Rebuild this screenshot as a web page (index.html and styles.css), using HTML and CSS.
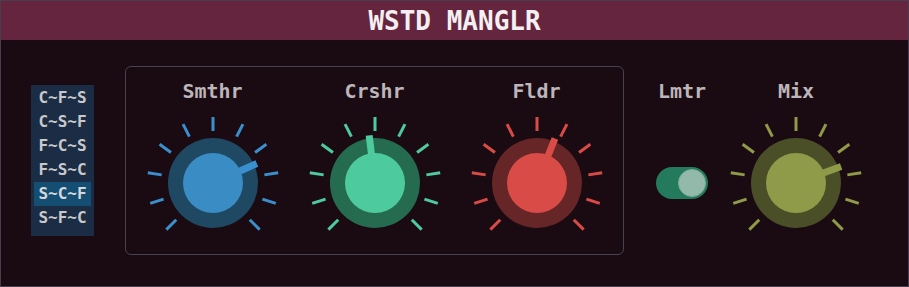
FILE: index.html
```html
<!DOCTYPE html>
<html lang="en">
<head>
    <meta charset="UTF-8">
    <meta name="viewport" content="width=device-width, initial-scale=1.0">
    <title>WSTD MANGLR</title>
    <link rel="stylesheet" href="styles.css">
</head>
<body>
    <div class="plugin">
        <div class="header">
            <h1 class="title">WSTD MANGLR</h1>
        </div>
        <div class="main">
            <ul class="algos">
                <li class="algo">C~F~S</li>
                <li class="algo">C~S~F</li>
                <li class="algo">F~C~S</li>
                <li class="algo">F~S~C</li>
                <li class="algo selected">S~C~F</li>
                <li class="algo">S~F~C</li>
            </ul>

            <div class="frame">
                <div class="knob-col">
                    <div class="label">Smthr</div>
                    <svg class="knob knob-blue" data-angle="66" viewBox="-70 -70 140 140"></svg>
                </div>
                <div class="knob-col">
                    <div class="label">Crshr</div>
                    <svg class="knob knob-green" data-angle="-7" viewBox="-70 -70 140 140"></svg>
                </div>
                <div class="knob-col">
                    <div class="label">Fldr</div>
                    <svg class="knob knob-red" data-angle="22" viewBox="-70 -70 140 140"></svg>
                </div>
            </div>

            <div class="side-col lmtr-col">
                <div class="label">Lmtr</div>
                <div class="toggle-box">
                    <div class="toggle on">
                        <div class="toggle-thumb"></div>
                    </div>
                </div>
            </div>
            <div class="side-col mix-col">
                <div class="label">Mix</div>
                <svg class="knob knob-olive" data-angle="70" viewBox="-70 -70 140 140"></svg>
            </div>
        </div>
    </div>

    <script>
        const SVG_NS = 'http://www.w3.org/2000/svg';

        function el(name, attrs) {
            const node = document.createElementNS(SVG_NS, name);
            for (const key in attrs) node.setAttribute(key, attrs[key]);
            return node;
        }

        function buildKnob(svg) {
            const angle = parseFloat(svg.dataset.angle);

            // 11 ticks from -135 to 135 degrees
            for (let i = 0; i < 11; i++) {
                const a = -135 + i * 27;
                svg.appendChild(el('line', {
                    class: 'tick', x1: 0, y1: -52, x2: 0, y2: -66,
                    transform: 'rotate(' + a + ')'
                }));
            }

            svg.appendChild(el('circle', { class: 'ring', r: 45 }));
            svg.appendChild(el('line', {
                class: 'pointer', x1: 0, y1: 0, x2: 0, y2: -48,
                transform: 'rotate(' + angle + ')'
            }));
            svg.appendChild(el('circle', { class: 'cap', r: 30 }));
        }

        document.querySelectorAll('.knob').forEach(buildKnob);
    </script>
</body>
</html>
```

FILE: styles.css
```css
body {
    margin: 0;
    background-color: #1a0a12;
    font-family: "DejaVu Sans Mono", "Liberation Mono", monospace;
}

.plugin {
    height: 287px;
    box-sizing: border-box;
    border: 1px solid #4a3d4d;
}

.header {
    height: 39px;
    background-color: #66253f;
    display: flex;
    justify-content: center;
    align-items: center;
}

.title {
    margin: 0;
    font-size: 26px;
    font-weight: bold;
    color: #f4f0f2;
}

.main {
    display: flex;
    align-items: flex-start;
    padding-top: 26px;
}

/* algorithm order list */
.algos {
    list-style: none;
    margin: 19px 0 0 30px;
    padding: 1px 3px 6px;
    width: 57px;
    background-color: #1b2d44;
}

.algo {
    height: 24px;
    line-height: 24px;
    text-align: center;
    font-size: 16px;
    font-weight: bold;
    color: #c9c9cb;
}

.algo.selected {
    background-color: #144e73;
    color: #d4d8db;
}

.frame {
    margin-left: 31px;
    width: 499px;
    height: 189px;
    box-sizing: border-box;
    border: 1px solid #4a4150;
    border-radius: 6px;
    padding-top: 12px;
    display: flex;
    justify-content: center;
}

.knob-col,
.side-col {
    display: flex;
    flex-direction: column;
    align-items: center;
}

.knob-col {
    width: 162px;
}

.side-col {
    padding-top: 13px;
}

.lmtr-col {
    width: 80px;
    margin-left: 18px;
}

.mix-col {
    width: 140px;
    margin-left: 4px;
}

.label {
    height: 24px;
    line-height: 24px;
    margin-bottom: 10px;
    font-size: 20px;
    font-weight: bold;
    color: #bcb5b9;
}

.knob {
    width: 140px;
    height: 140px;
    display: block;
}

.knob .tick {
    stroke-width: 3;
}

.knob .pointer {
    stroke-width: 7;
}

.knob-blue .ring { fill: #1f4862; }
.knob-blue .cap { fill: #3a8cc4; }
.knob-blue .tick,
.knob-blue .pointer { stroke: #3a8fcf; }

.knob-green .ring { fill: #256b50; }
.knob-green .cap { fill: #4ecb9e; }
.knob-green .tick,
.knob-green .pointer { stroke: #4ecb9e; }

.knob-red .ring { fill: #662526; }
.knob-red .cap { fill: #d94b47; }
.knob-red .tick,
.knob-red .pointer { stroke: #d94b47; }

.knob-olive .ring { fill: #4a4f27; }
.knob-olive .cap { fill: #8f9b48; }
.knob-olive .tick,
.knob-olive .pointer { stroke: #8f9b48; }

.toggle-box {
    height: 140px;
    display: flex;
    align-items: center;
    justify-content: center;
}

.toggle {
    width: 52px;
    height: 32px;
    box-sizing: border-box;
    border-radius: 16px;
    padding: 2px;
    background-color: #237a5c;
    display: flex;
    align-items: center;
}

.toggle.on {
    justify-content: flex-end;
}

.toggle-thumb {
    width: 28px;
    height: 28px;
    box-sizing: border-box;
    border-radius: 50%;
    border: 1px solid #7faa98;
    background-color: #93b9aa;
}
```
